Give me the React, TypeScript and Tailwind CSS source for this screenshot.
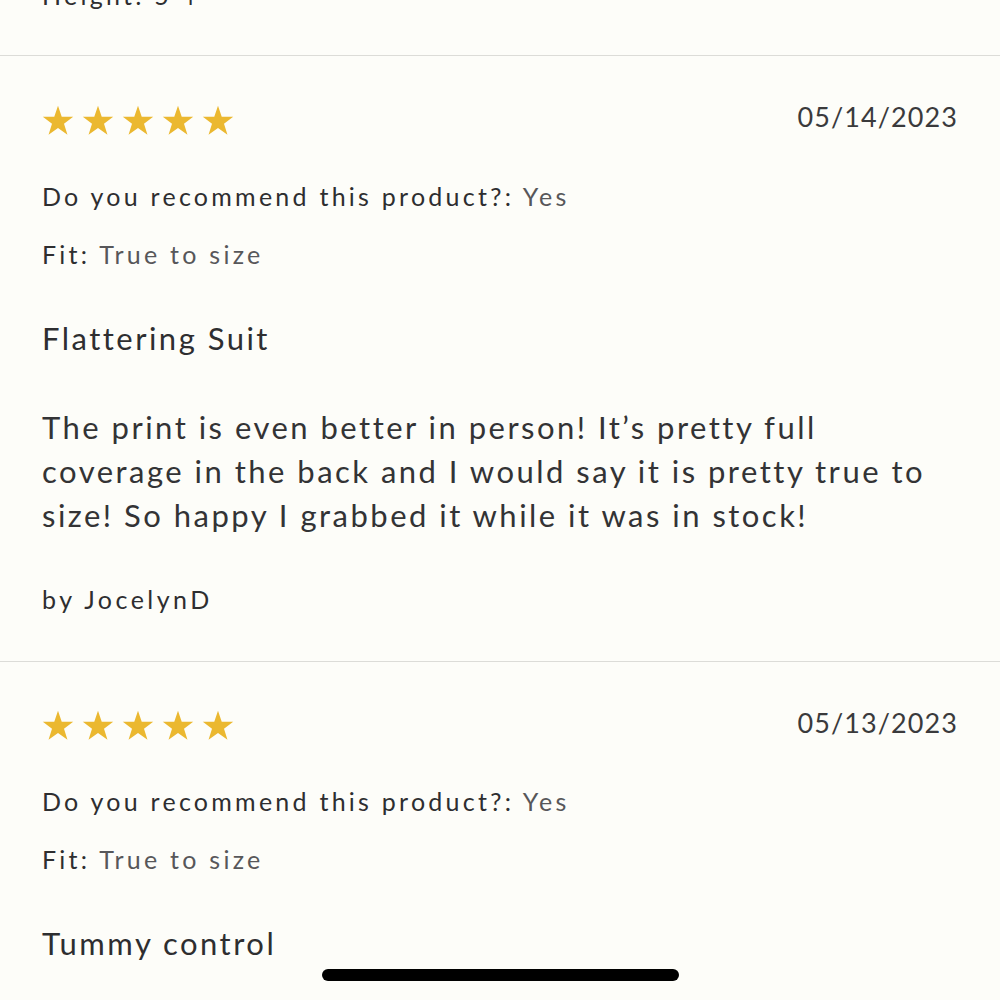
import React from "react";

const Star = () => (
  <svg width="32" height="31" viewBox="0 0 24 23" className="shrink-0">
    <polygon
      points="12,0.5 14.8,8.6 23.4,8.7 16.5,13.9 19.1,22.2 12,17.2 4.9,22.2 7.5,13.9 0.6,8.7 9.2,8.6"
      fill="#ebb830"
    />
  </svg>
);

type Review = {
  date: string;
  title: string;
  body?: string;
  author?: string;
};

const ReviewBlock = ({ r }: { r: Review }) => (
  <div className="flex flex-col border-t border-[#dcdcd8] px-[42px]">
    <div className="flex items-center justify-between pt-[47px]">
      <div className="flex gap-[8px]">
        <Star />
        <Star />
        <Star />
        <Star />
        <Star />
      </div>
      <div className="-mt-[6px] text-[27px] tracking-[0.04em] text-[#3a3a3c]">{r.date}</div>
    </div>
    <div className="mt-[41px] text-[25px] leading-[34px] tracking-[0.13em] text-[#2e2e30]">
      Do you recommend this product?: <span className="text-[#57575a]">Yes</span>
    </div>
    <div className="mt-[24px] text-[25px] leading-[34px] tracking-[0.13em] text-[#2e2e30]">
      Fit: <span className="text-[#57575a]">True to size</span>
    </div>
    <div className="mt-[47px] text-[31px] leading-[40px] tracking-[0.08em] text-[#2e2e30]">{r.title}</div>
    {r.body && (
      <div className="mt-[47px] w-[900px] text-[31px] leading-[44px] tracking-[0.08em] text-[#333335]">
        {r.body}
      </div>
    )}
    {r.author && (
      <div className="mt-[45px] pb-[45px] text-[25px] leading-[34px] tracking-[0.14em] text-[#2e2e30]">
        {r.author}
      </div>
    )}
  </div>
);

export default function App() {
  return (
    <div
      className="relative flex h-[1000px] w-[1000px] flex-col overflow-hidden bg-[#fdfdf9]"
      style={{ fontFamily: "Lato, 'Open Sans', sans-serif" }}
    >
      <div className="flex h-[55px] flex-col px-[42px]">
        <div className="-mt-[22px] text-[25px] leading-[34px] tracking-[0.13em] text-[#2e2e30]">
          Height: 5'4"
        </div>
      </div>
      <ReviewBlock
        r={{
          date: "05/14/2023",
          title: "Flattering Suit",
          body: "The print is even better in person! It’s pretty full coverage in the back and I would say it is pretty true to size! So happy I grabbed it while it was in stock!",
          author: "by JocelynD",
        }}
      />
      <ReviewBlock r={{ date: "05/13/2023", title: "Tummy control" }} />
      <div className="absolute left-[322px] top-[969px] h-[12px] w-[357px] rounded-full bg-black" />
    </div>
  );
}
